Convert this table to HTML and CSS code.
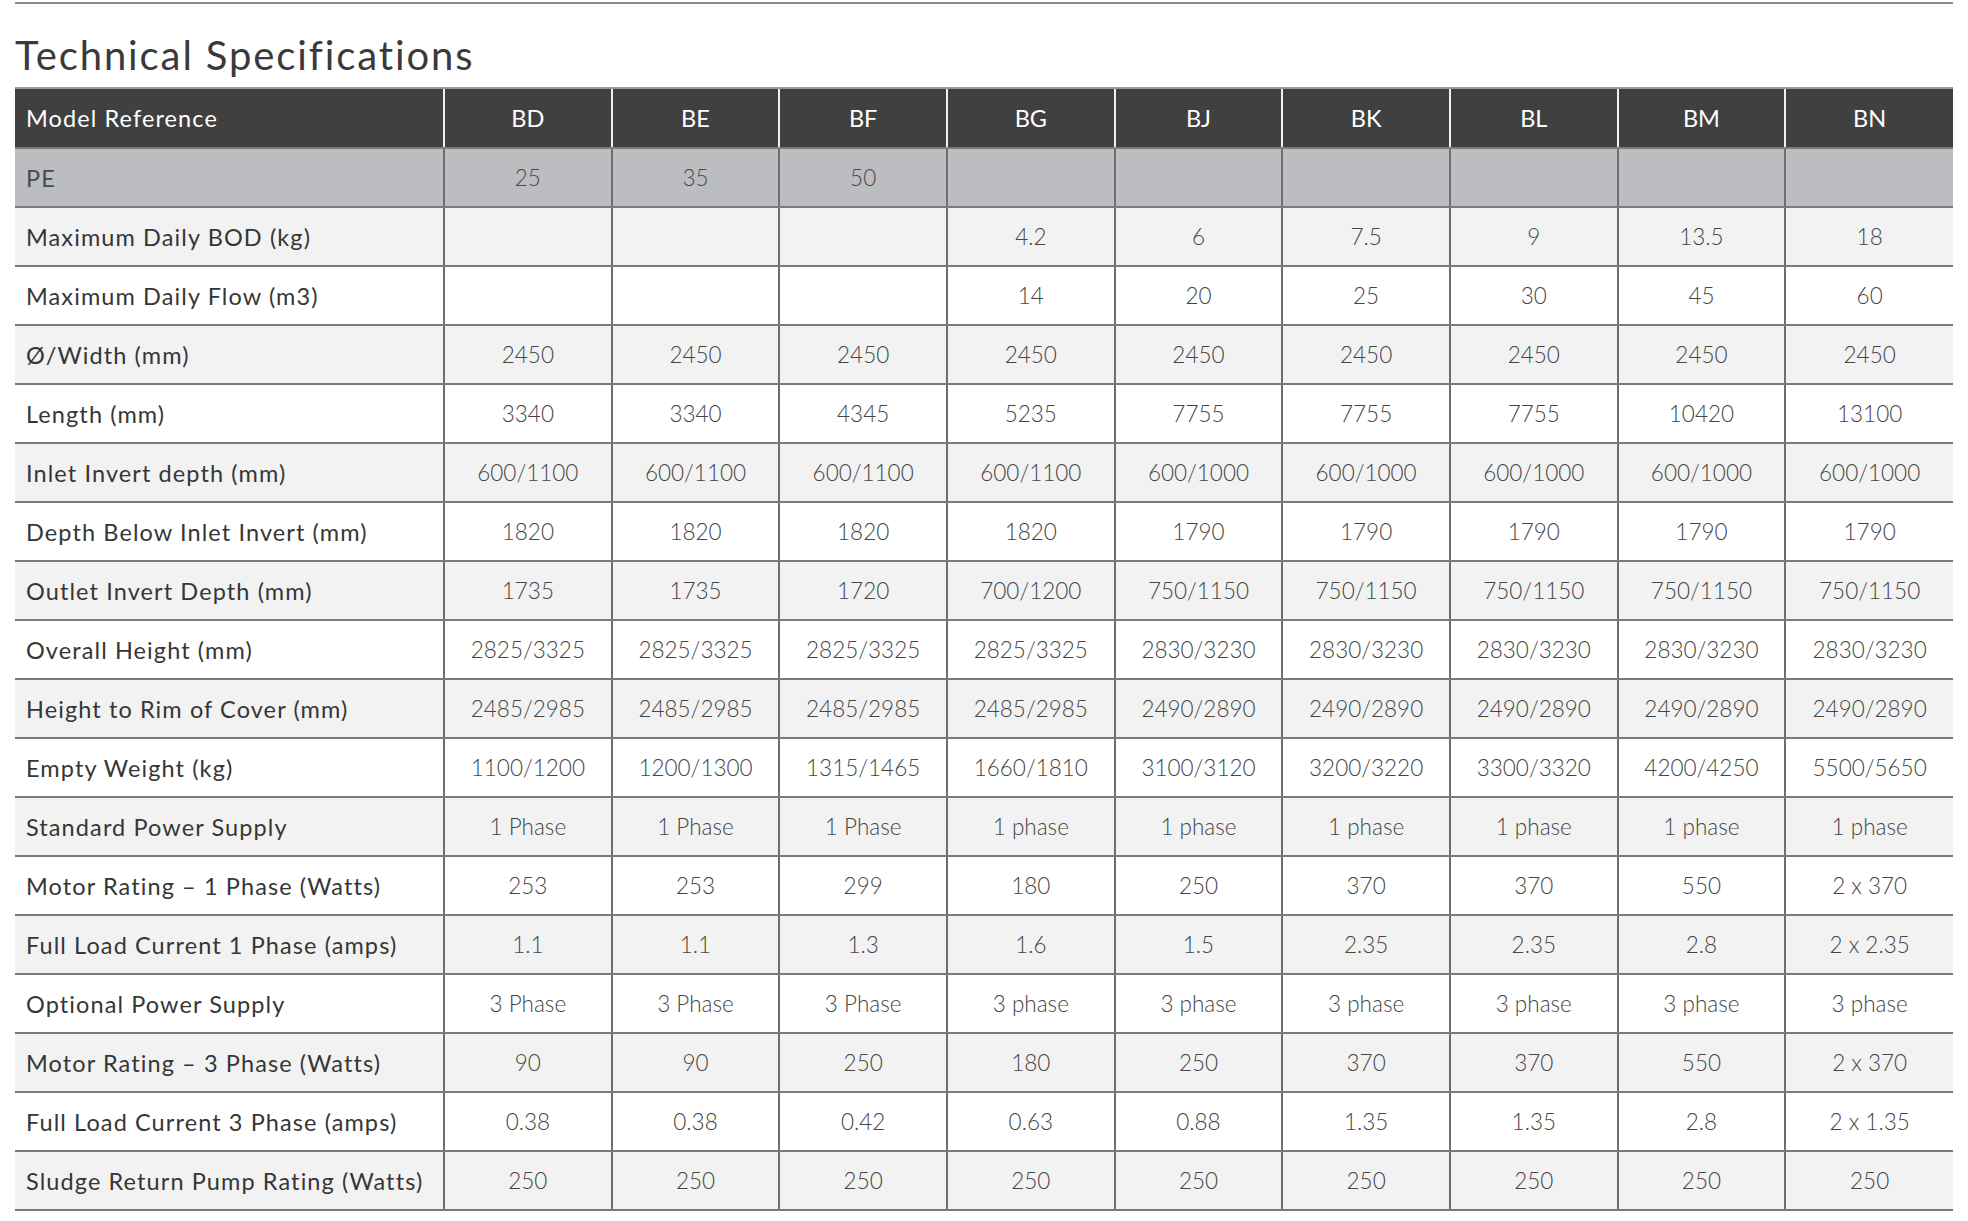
FILE: index.html
```html
<!DOCTYPE html>
<html lang="en">
<head>
<meta charset="utf-8">
<title>Technical Specifications</title>
<link rel="stylesheet" href="styles.css">
</head>
<body>
<div class="page">
  <div class="rule"></div>
  <h2 class="title">Technical Specifications</h2>
  <table class="spec">
    <colgroup>
      <col class="col-label">
      <col class="col-model"><col class="col-model"><col class="col-model">
      <col class="col-model"><col class="col-model"><col class="col-model">
      <col class="col-model"><col class="col-model"><col class="col-model">
    </colgroup>
    <thead>
      <tr><th class="label">Model Reference</th><th>BD</th><th>BE</th><th>BF</th><th>BG</th><th>BJ</th><th>BK</th><th>BL</th><th>BM</th><th>BN</th></tr>
    </thead>
    <tbody>
      <tr class="pe"><td class="label">PE</td><td>25</td><td>35</td><td>50</td><td></td><td></td><td></td><td></td><td></td><td></td></tr>
      <tr><td class="label">Maximum Daily BOD (kg)</td><td></td><td></td><td></td><td>4.2</td><td>6</td><td>7.5</td><td>9</td><td>13.5</td><td>18</td></tr>
      <tr><td class="label">Maximum Daily Flow (m3)</td><td></td><td></td><td></td><td>14</td><td>20</td><td>25</td><td>30</td><td>45</td><td>60</td></tr>
      <tr><td class="label">Ø/Width (mm)</td><td>2450</td><td>2450</td><td>2450</td><td>2450</td><td>2450</td><td>2450</td><td>2450</td><td>2450</td><td>2450</td></tr>
      <tr><td class="label">Length (mm)</td><td>3340</td><td>3340</td><td>4345</td><td>5235</td><td>7755</td><td>7755</td><td>7755</td><td>10420</td><td>13100</td></tr>
      <tr><td class="label">Inlet Invert depth (mm)</td><td>600/1100</td><td>600/1100</td><td>600/1100</td><td>600/1100</td><td>600/1000</td><td>600/1000</td><td>600/1000</td><td>600/1000</td><td>600/1000</td></tr>
      <tr><td class="label">Depth Below Inlet Invert (mm)</td><td>1820</td><td>1820</td><td>1820</td><td>1820</td><td>1790</td><td>1790</td><td>1790</td><td>1790</td><td>1790</td></tr>
      <tr><td class="label">Outlet Invert Depth (mm)</td><td>1735</td><td>1735</td><td>1720</td><td>700/1200</td><td>750/1150</td><td>750/1150</td><td>750/1150</td><td>750/1150</td><td>750/1150</td></tr>
      <tr><td class="label">Overall Height (mm)</td><td>2825/3325</td><td>2825/3325</td><td>2825/3325</td><td>2825/3325</td><td>2830/3230</td><td>2830/3230</td><td>2830/3230</td><td>2830/3230</td><td>2830/3230</td></tr>
      <tr><td class="label">Height to Rim of Cover (mm)</td><td>2485/2985</td><td>2485/2985</td><td>2485/2985</td><td>2485/2985</td><td>2490/2890</td><td>2490/2890</td><td>2490/2890</td><td>2490/2890</td><td>2490/2890</td></tr>
      <tr><td class="label">Empty Weight (kg)</td><td>1100/1200</td><td>1200/1300</td><td>1315/1465</td><td>1660/1810</td><td>3100/3120</td><td>3200/3220</td><td>3300/3320</td><td>4200/4250</td><td>5500/5650</td></tr>
      <tr><td class="label">Standard Power Supply</td><td>1 Phase</td><td>1 Phase</td><td>1 Phase</td><td>1 phase</td><td>1 phase</td><td>1 phase</td><td>1 phase</td><td>1 phase</td><td>1 phase</td></tr>
      <tr><td class="label">Motor Rating – 1 Phase (Watts)</td><td>253</td><td>253</td><td>299</td><td>180</td><td>250</td><td>370</td><td>370</td><td>550</td><td>2 x 370</td></tr>
      <tr><td class="label">Full Load Current 1 Phase (amps)</td><td>1.1</td><td>1.1</td><td>1.3</td><td>1.6</td><td>1.5</td><td>2.35</td><td>2.35</td><td>2.8</td><td>2 x 2.35</td></tr>
      <tr><td class="label">Optional Power Supply</td><td>3 Phase</td><td>3 Phase</td><td>3 Phase</td><td>3 phase</td><td>3 phase</td><td>3 phase</td><td>3 phase</td><td>3 phase</td><td>3 phase</td></tr>
      <tr><td class="label">Motor Rating – 3 Phase (Watts)</td><td>90</td><td>90</td><td>250</td><td>180</td><td>250</td><td>370</td><td>370</td><td>550</td><td>2 x 370</td></tr>
      <tr><td class="label">Full Load Current 3 Phase (amps)</td><td>0.38</td><td>0.38</td><td>0.42</td><td>0.63</td><td>0.88</td><td>1.35</td><td>1.35</td><td>2.8</td><td>2 x 1.35</td></tr>
      <tr><td class="label">Sludge Return Pump Rating (Watts)</td><td>250</td><td>250</td><td>250</td><td>250</td><td>250</td><td>250</td><td>250</td><td>250</td><td>250</td></tr>
    </tbody>
  </table>
</div>
</body>
</html>
```

FILE: styles.css
```css
html, body {
  margin: 0;
  padding: 0;
  background: #ffffff;
}

.page {
  padding: 2px 15px 0 15px;
  font-family: Lato, "Noto Sans", "Liberation Sans", sans-serif;
  color: #3a3a3a;
}

.rule {
  border-top: 2px solid #8c8c8c;
}

.title {
  margin: 0;
  height: 83px;
  box-sizing: border-box;
  padding-top: 27px;
  font-size: 40px;
  line-height: 48px;
  font-weight: 400;
  color: #3a3a3a;
  letter-spacing: 1.9px;
}

.spec {
  width: 1938px;
  border-collapse: collapse;
  table-layout: fixed;
}

.col-label {
  width: 429px;
}

.col-model {
  width: 167.66px;
}

.spec th,
.spec td {
  height: 57px;
  padding: 0;
  text-align: center;
  font-size: 22.5px;
  border-left: 2px solid #6e6e6e;
  border-bottom: 2px solid #7a7a7a;
  white-space: nowrap;
}

.spec th.label,
.spec td.label {
  text-align: left;
  padding-left: 11px;
  border-left: none;
  font-size: 23.5px;
  letter-spacing: 1.1px;
}

.spec thead th {
  background: #404040;
  color: #ffffff;
  font-weight: 400;
  font-size: 23.5px;
  border-top: 2px solid #9a9a9a;
  border-left: 2px solid #f0f0f0;
  border-bottom: 2px solid #7a7a7a;
  height: 58px;
}

.spec thead th.label {
  border-left: none;
}

.spec td {
  font-weight: 300;
  color: #454545;
}

.spec td.label {
  font-weight: 400;
  color: #363636;
}

.spec tbody tr:nth-child(even) {
  background: #f2f2f2;
}

.spec tbody tr:nth-child(odd) {
  background: #ffffff;
}

.spec tbody tr.pe {
  background: #bcbdc0;
}

.spec tbody tr.pe td {
  color: #4a4a4a;
}
```
